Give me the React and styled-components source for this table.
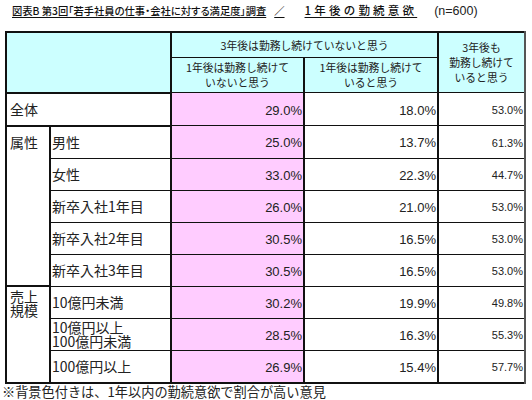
import React from 'react';
import styled, { createGlobalStyle } from 'styled-components';

const GlobalStyle = createGlobalStyle`
  html, body {
    margin: 0;
    padding: 0;
    background: #ffffff;
  }
  body {
    font-family: "Liberation Sans", "Noto Sans CJK JP", sans-serif;
    color: #222;
  }
`;

const rows = [
  { group: '属性', span: 5, label: '男性', a: '25.0%', b: '13.7%', c: '61.3%' },
  { label: '女性', a: '33.0%', b: '22.3%', c: '44.7%' },
  { label: '新卒入社1年目', a: '26.0%', b: '21.0%', c: '53.0%' },
  { label: '新卒入社2年目', a: '30.5%', b: '16.5%', c: '53.0%' },
  { label: '新卒入社3年目', a: '30.5%', b: '16.5%', c: '53.0%' },
  { group: '売上\n規模', span: 3, label: '10億円未満', a: '30.2%', b: '19.9%', c: '49.8%', top: true },
  { label: '10億円以上\n100億円未満', a: '28.5%', b: '16.3%', c: '55.3%', tight: true },
  { label: '100億円以上', a: '26.9%', b: '15.4%', c: '57.7%' },
];

const App = () => {
  return (
    <Page>
      <GlobalStyle />
      <TitleBar>
        <Title>
          <TitleMain>図表B 第3回「若手社員の仕事・会社に対する満足度」調査</TitleMain>
          <TitleSlash>／</TitleSlash>
          <TitleSub>1年後の勤続意欲</TitleSub>
        </Title>
        <Count>(n=600)</Count>
      </TitleBar>
      <Table>
        <colgroup>
          <col style={{ width: 44 }} />
          <col style={{ width: 121 }} />
          <col style={{ width: 133 }} />
          <col style={{ width: 134 }} />
          <col style={{ width: 87 }} />
        </colgroup>
        <thead>
          <tr>
            <HeadCell colSpan={2} rowSpan={2} />
            <HeadCell colSpan={2} short>3年後は勤務し続けていないと思う</HeadCell>
            <HeadCell rowSpan={2} edge>3年後も<br />勤務し続けて<br />いると思う</HeadCell>
          </tr>
          <tr>
            <HeadCell tall>1年後は勤務し続けて<br />いないと思う</HeadCell>
            <HeadCell tall>1年後は勤務し続けて<br />いると思う</HeadCell>
          </tr>
        </thead>
        <tbody>
          <tr>
            <LabelCell colSpan={2} divider>全体</LabelCell>
            <NumCell pink>29.0%</NumCell>
            <NumCell>18.0%</NumCell>
            <SmallNumCell>53.0%</SmallNumCell>
          </tr>
          {rows.map((r, i) => (
            <tr key={i}>
              {r.group && (
                <GroupCell rowSpan={r.span} tight={r.top}>
                  {r.group}
                </GroupCell>
              )}
              <LabelCell tight={r.tight}>{r.label}</LabelCell>
              <NumCell pink>{r.a}</NumCell>
              <NumCell>{r.b}</NumCell>
              <SmallNumCell>{r.c}</SmallNumCell>
            </tr>
          ))}
        </tbody>
      </Table>
      <Note>※背景色付きは、1年以内の勤続意欲で割合が高い意見</Note>
    </Page>
  );
};

export default App;

const Page = styled.div`
  width: 532px;
  height: 400px;
  padding: 3px 0 0 0;
  box-sizing: border-box;
`;

const TitleBar = styled.div`
  display: flex;
  align-items: baseline;
  padding-left: 12px;
  height: 18px;
  margin-bottom: 10px;
  white-space: nowrap;
`;

const Title = styled.span`
  font-family: "Noto Sans CJK JP", sans-serif;
  font-size: 10.3px;
  font-weight: 500;
  line-height: 15px;
  color: #111;
  text-decoration: underline;
  text-underline-offset: 2px;
`;

const TitleMain = styled.span`
  font-feature-settings: "palt";
`;

const TitleSlash = styled.span`
  margin: 0 20px 0 8px;
`;

const TitleSub = styled.span`
  font-size: 11.5px;
  letter-spacing: 3.2px;
  margin-right: -3px;
`;

const Count = styled.span`
  margin-left: 20px;
  font-size: 12.5px;
  color: #222;
`;

const Table = styled.table`
  margin-left: 5px;
  width: 519px;
  table-layout: fixed;
  border-collapse: collapse;
  border: 2px solid #111;
  border-right-color: #555;
`;

const HeadCell = styled.th`
  background: #ccffff;
  font-family: "Noto Sans CJK JP", sans-serif;
  font-weight: 400;
  font-size: 10.8px;
  line-height: 15px;
  color: #222;
  text-align: center;
  vertical-align: middle;
  border: 2px solid #111;
  border-top-width: 1px;
  border-bottom-width: 1px;
  border-right-color: ${({ edge }) => (edge ? '#555' : '#111')};
  height: ${({ short, tall }) => (short ? '24px' : tall ? '34px' : 'auto')};
  padding: 0 2px;
  &:empty {
    border-bottom-width: 2px;
  }
`;

const LabelCell = styled.td`
  font-family: "Noto Sans CJK JP", sans-serif;
  font-size: 14px;
  line-height: ${({ tight }) => (tight ? '14px' : '16px')};
  color: #222;
  white-space: pre-line;
  text-align: left;
  vertical-align: middle;
  padding: 0 0 0 1px;
  height: 31px;
  border-top: 1px solid #111;
  border-bottom: 1px solid #111;
  border-left: 2px solid #111;
  border-right: 2px solid #111;
  ${({ divider }) => divider && 'padding-left: 3px; border-bottom-width: 2px;'}
`;

const GroupCell = styled.td`
  font-family: "Noto Sans CJK JP", sans-serif;
  font-size: 14px;
  line-height: ${({ tight }) => (tight ? '14px' : '16px')};
  color: #222;
  white-space: pre-line;
  vertical-align: top;
  padding: ${({ tight }) => (tight ? '2px 0 0 3px' : '7px 0 0 3px')};
  border: 2px solid #111;
`;

const NumCell = styled.td`
  font-size: 13px;
  color: #222;
  text-align: right;
  vertical-align: middle;
  padding: 2px 1px 0 0;
  background: ${({ pink }) => (pink ? '#ffccff' : '#ffffff')};
  border-top: 1px solid #111;
  border-bottom: 1px solid #111;
  border-left: 2px solid #111;
  border-right: 2px solid #111;
`;

const SmallNumCell = styled(NumCell)`
  font-size: 11px;
  border-right-color: #555;
`;

const Note = styled.div`
  font-family: "Noto Sans CJK JP", sans-serif;
  font-size: 13.2px;
  line-height: 16px;
  color: #222;
  padding: 0 0 0 2px;
`;
